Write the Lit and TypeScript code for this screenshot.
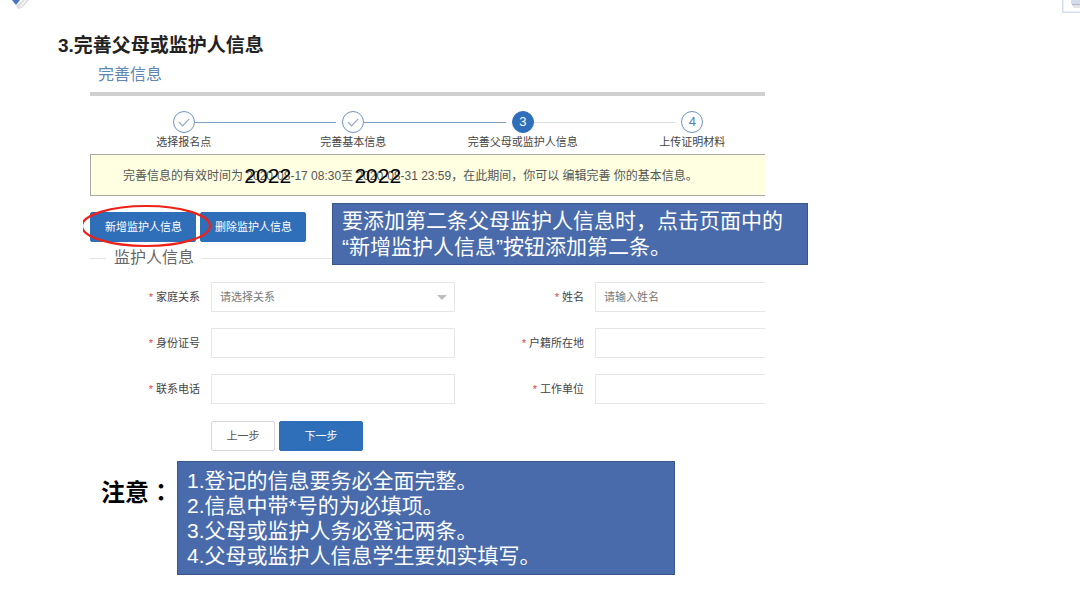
import { LitElement, html, css, nothing } from "lit";
import { customElement } from "lit/decorators.js";
import { classMap } from "lit/directives/class-map.js";

type StepState = "done" | "current" | "pending";

interface Step {
  label: string;
  state: StepState;
}

interface Field {
  id: string;
  label: string;
  placeholder?: string;
  kind?: "select";
}

const STEPS: Step[] = [
  { label: "选择报名点", state: "done" },
  { label: "完善基本信息", state: "done" },
  { label: "完善父母或监护人信息", state: "current" },
  { label: "上传证明材料", state: "pending" },
];

const FIELDS: Field[] = [
  { id: "relation", label: "家庭关系", placeholder: "请选择关系", kind: "select" },
  { id: "name", label: "姓名", placeholder: "请输入姓名" },
  { id: "idno", label: "身份证号" },
  { id: "residence", label: "户籍所在地" },
  { id: "phone", label: "联系电话" },
  { id: "employer", label: "工作单位" },
];

const NOTES = [
  "1.登记的信息要务必全面完整。",
  "2.信息中带*号的为必填项。",
  "3.父母或监护人务必登记两条。",
  "4.父母或监护人信息学生要如实填写。",
];

@customElement("step-bar")
export class StepBar extends LitElement {
  static styles = css`
    :host {
      display: block;
    }
    .steps {
      display: grid;
      grid-template-columns: repeat(4, 1fr);
      margin: 0;
      padding: 0;
      list-style: none;
    }
    .step {
      display: grid;
      grid-template-columns: 1fr 22px 1fr;
      align-items: center;
      justify-items: center;
    }
    .line {
      justify-self: stretch;
      height: 1px;
      background: #7f9fc4;
    }
    .line.before {
      margin-right: 6px;
    }
    .line.muted {
      background: #d9dde3;
    }
    .line.none {
      background: none;
    }
    .dot {
      box-sizing: border-box;
      display: flex;
      align-items: center;
      justify-content: center;
      width: 22px;
      height: 22px;
      border: 1px solid #6f93c2;
      border-radius: 50%;
      color: #4f7dbb;
      font-size: 13px;
      line-height: 20px;
    }
    .dot.current {
      border-color: #2f6fba;
      background: #2f6fba;
      color: #fff;
    }
    .label {
      grid-column: 1 / -1;
      margin-top: 2px;
      color: #444;
      font-size: 11px;
      line-height: 15px;
      white-space: nowrap;
    }
  `;

  render() {
    return html`<ol class="steps">
      ${STEPS.map((step, i) => {
        const next = STEPS[i + 1];
        return html`<li class="step">
          <span
            class=${classMap({
              line: true,
              before: true,
              none: i === 0,
              muted: step.state === "pending",
            })}
          ></span>
          <span class=${classMap({ dot: true, current: step.state === "current" })}>
            ${step.state === "done"
              ? html`<svg width="14" height="12" viewBox="0 0 14 12" fill="none" stroke="#8fa6c2" stroke-width="1.2">
                  <path d="M2 6.2 5.6 9.8 12.2 2.8" />
                </svg>`
              : i + 1}
          </span>
          <span
            class=${classMap({
              line: true,
              none: !next,
              muted: next?.state === "pending",
            })}
          ></span>
          <span class="label">${step.label}</span>
        </li>`;
      })}
    </ol>`;
  }
}

@customElement("app-root")
export class AppRoot extends LitElement {
  static styles = css`
    :host {
      display: block;
      background: #fff;
      color: #444;
      font-family: "Liberation Sans", "Noto Sans CJK SC", sans-serif;
    }
    *,
    *::before,
    *::after {
      box-sizing: border-box;
    }
    button,
    input,
    select {
      margin: 0;
      font-family: inherit;
    }

    .top {
      display: flex;
      justify-content: space-between;
      align-items: flex-start;
      height: 13px;
      padding-left: 10px;
    }
    .top svg {
      display: block;
    }

    .title {
      margin: 21px 0 0 58px;
      color: #222;
      font-size: 19px;
      font-weight: 700;
      line-height: 24px;
    }

    .panel {
      width: 62.5%;
      margin: 5px 0 0 90px;
    }
    .panel-title {
      margin: 0;
      padding: 0 8px 5px;
      border-bottom: 4px solid #cfcfcf;
      color: #5f87b3;
      font-size: 16px;
      font-weight: 400;
      line-height: 24px;
    }
    .steps {
      margin: 15px -12px 0 9px;
    }
    .notice {
      margin: 4px 0 0;
      padding: 11px 0 9px 32px;
      border: 1px solid #a8a8a0;
      border-right: 0;
      background: #ffffe1;
      color: #555;
      font-size: 12px;
      line-height: 20px;
      white-space: nowrap;
    }
    .year {
      position: relative;
    }
    .year-new {
      position: absolute;
      top: -5px;
      left: -2px;
      color: #000;
      font-size: 21px;
      line-height: 24px;
    }

    .toolbar {
      position: relative;
      display: flex;
      gap: 4px;
      margin-top: 16px;
    }
    .btn {
      height: 30px;
      padding: 0 14px;
      border: 1px solid #2f6fba;
      border-radius: 2px;
      background: #2f6fba;
      color: #fff;
      font-size: 11px;
      line-height: 16px;
      white-space: nowrap;
    }
    .toolbar .btn {
      width: 106px;
    }
    .btn.plain {
      width: 64px;
      border-color: #d8d8d8;
      background: #fff;
      color: #555;
    }
    .btn.next {
      width: 84px;
    }
    .ring {
      position: absolute;
      top: -8px;
      left: -7px;
      pointer-events: none;
    }
    .box {
      border: 1px solid #38578f;
      background: #496bab;
      color: #fff;
      font-size: 21px;
    }
    .callout {
      position: absolute;
      top: -9px;
      left: 242px;
      width: 476px;
      margin: 0;
      padding: 4px 9px;
      line-height: 26px;
      white-space: nowrap;
    }

    .form {
      padding-top: 6px;
    }
    .group {
      margin: 0;
      padding: 0;
      border: 0;
      min-width: 0;
    }
    .group-title {
      display: flex;
      align-items: center;
      gap: 8px;
      width: 100%;
      margin: 0 0 14px;
      padding: 0;
      color: #666;
      font-size: 16px;
      line-height: 20px;
    }
    .group-title::before,
    .group-title::after {
      content: "";
      height: 1px;
      background: #e4e4e4;
    }
    .group-title::before {
      width: 16px;
    }
    .group-title::after {
      flex: 1;
    }
    .fields {
      display: grid;
      grid-template-columns: 365fr 291fr;
      gap: 16px 19px;
    }
    .field {
      display: grid;
      grid-template-columns: 110px 1fr;
      gap: 11px;
      align-items: center;
    }
    .field label {
      color: #444;
      font-size: 11px;
      line-height: 16px;
      text-align: right;
    }
    .star {
      color: #e04545;
    }
    .control {
      position: relative;
      display: flex;
    }
    .input {
      width: 100%;
      height: 30px;
      padding: 0 8px;
      border: 1px solid #e6e6e6;
      border-radius: 0;
      outline: 0;
      appearance: none;
      background: #fff;
      color: #777;
      font-size: 11px;
      line-height: 16px;
    }
    .input::placeholder {
      color: #777;
      opacity: 1;
    }
    .field:nth-child(even) .input {
      border-right: 0;
    }
    .caret {
      position: absolute;
      top: 13px;
      right: 8px;
      pointer-events: none;
    }
    .actions {
      display: flex;
      gap: 4px;
      margin: 17px 0 0 121px;
    }

    .notes {
      display: flex;
      align-items: flex-start;
      gap: 4px;
      margin: 10px 37.5% 0 101px;
    }
    .notes-title {
      width: 72px;
      margin: 0;
      padding-top: 15px;
      color: #000;
      font-size: 24px;
      font-weight: 700;
      line-height: 30px;
      white-space: nowrap;
    }
    .colon {
      font-family: "Noto Sans CJK TC", sans-serif;
    }
    .notes-list {
      flex: 1;
      margin: 0;
      padding: 6px 9px;
      line-height: 25px;
      list-style: none;
      white-space: nowrap;
    }
  `;

  private renderField(field: Field) {
    return html`<div class="field">
      <label for=${field.id}><span class="star">*</span> ${field.label}</label>
      <div class="control">
        ${field.kind === "select"
          ? html`<select class="input" id=${field.id}>
                <option>${field.placeholder}</option>
              </select>
              <svg class="caret" width="10" height="5" viewBox="0 0 10 5">
                <path d="M0 0h10L5 5z" fill="#bdbdbd" />
              </svg>`
          : html`<input class="input" id=${field.id} type="text" placeholder=${field.placeholder ?? nothing} />`}
      </div>
    </div>`;
  }

  render() {
    return html`
      <header class="top">
        <svg width="20" height="10" viewBox="0 0 20 10">
          <path d="M6 6 13 0h6l-7 8-4 1z" fill="#dcdcdf" />
          <path d="M10 7 16 0" stroke="#f7f7f7" stroke-width="1.5" />
          <path d="M2 0h8L6 5z" fill="#4a74bd" />
        </svg>
        <svg width="18" height="13" viewBox="0 0 18 13">
          <path d="M.75 0v12.25H18" fill="none" stroke="#d5def0" stroke-width="1.5" />
          <path d="M9 0h9v4H9z" fill="#d3dbec" />
          <path d="M10 4h8v1.5h-8z" fill="#b9bbc3" />
          <path d="M11 5.5h7V8h-7z" fill="#e6e6e8" />
        </svg>
      </header>

      <h1 class="title">3.完善父母或监护人信息</h1>

      <main class="panel">
        <h2 class="panel-title">完善信息</h2>
        <step-bar class="steps"></step-bar>
        <p class="notice">完善信息的有效时间为 <span class="year">2020<span class="year-new">2022</span></span>-08-17 08:30至 <span class="year">2020<span class="year-new">2022</span></span>-08-31 23:59，在此期间，你可以 编辑完善 你的基本信息。</p>

        <div class="toolbar">
          <button class="btn" type="button">新增监护人信息</button>
          <button class="btn" type="button">删除监护人信息</button>
          <svg class="ring" width="130" height="44" viewBox="0 0 130 44" fill="none">
            <ellipse cx="63" cy="22" rx="64" ry="20" stroke="#ee2218" stroke-width="2.2" />
          </svg>
          <p class="box callout">要添加第二条父母监护人信息时，点击页面中的<br />“新增监护人信息”按钮添加第二条。</p>
        </div>

        <form class="form">
          <fieldset class="group">
            <legend class="group-title">监护人信息</legend>
            <div class="fields">${FIELDS.map((f) => this.renderField(f))}</div>
          </fieldset>
          <div class="actions">
            <button class="btn plain" type="button">上一步</button>
            <button class="btn next" type="button">下一步</button>
          </div>
        </form>
      </main>

      <section class="notes">
        <h2 class="notes-title">注意<span class="colon">：</span></h2>
        <ul class="box notes-list">
          ${NOTES.map((n) => html`<li>${n}</li>`)}
        </ul>
      </section>
    `;
  }
}
